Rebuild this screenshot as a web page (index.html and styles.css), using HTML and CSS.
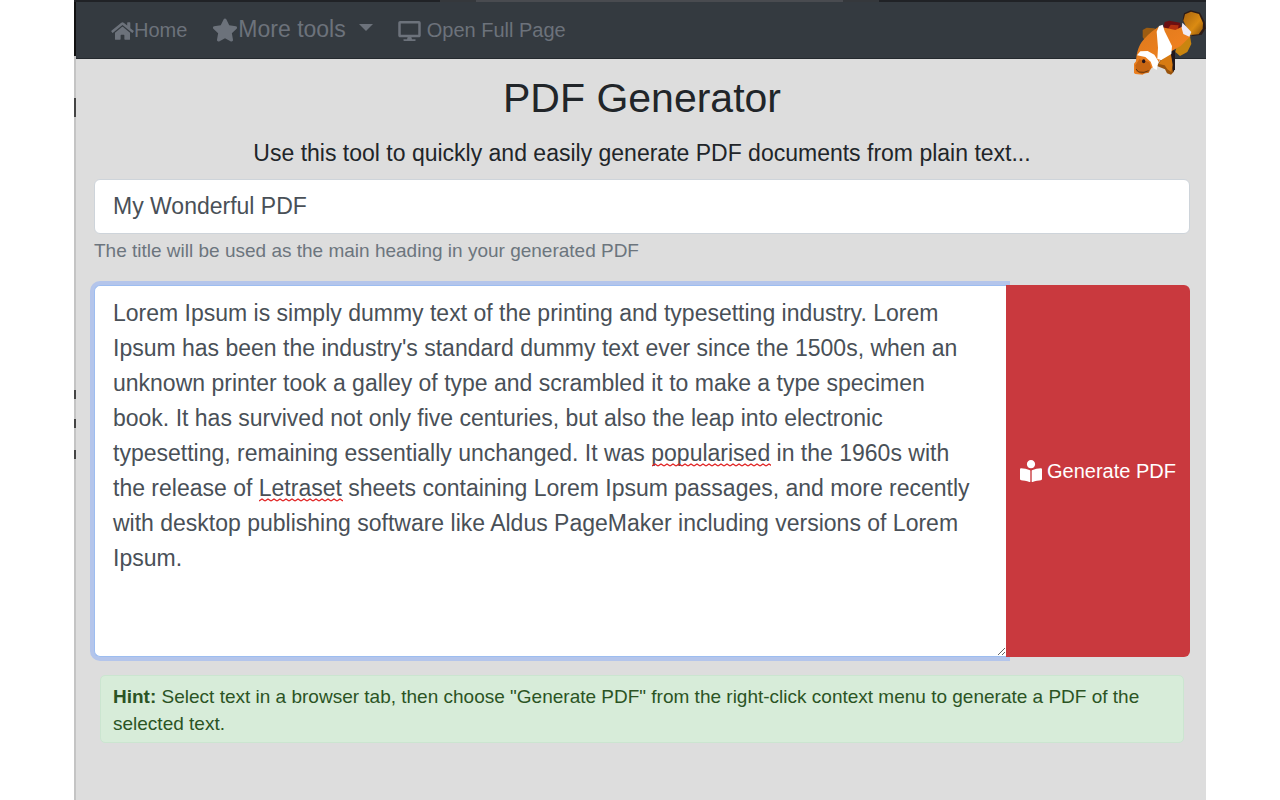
FILE: index.html
```
<!DOCTYPE html>
<html lang="en">
<head>
    <meta charset="UTF-8">
    <meta name="viewport" content="width=device-width, initial-scale=1.0">
    <title>PDF Generator</title>
    <link rel="stylesheet" href="styles.css">
</head>
<body>
    <div class="window">
        <div class="tab-strip"><span class="tab"></span><span class="tab light"></span><span class="tab"></span></div>
        <div class="edge">
            <i class="speck tall"></i>
            <i class="speck one"></i>
            <i class="speck two"></i>
            <i class="speck three"></i>
        </div>
        <div class="popup">
            <nav class="navbar">
                <a href="#" class="nav-link">
                    <svg class="icon-home" viewBox="0 0 576 512" fill="currentColor"><path d="M280.37 148.26L96 300.11V464a16 16 0 0 0 16 16l112.06-.29a16 16 0 0 0 15.92-16V368a16 16 0 0 1 16-16h64a16 16 0 0 1 16 16v95.64a16 16 0 0 0 16 16.05L464 480a16 16 0 0 0 16-16V300L295.67 148.26a12.19 12.19 0 0 0-15.3 0zM571.6 251.47L488 182.56V44.05a12 12 0 0 0-12-12h-56a12 12 0 0 0-12 12v72.61L318.47 43a48 48 0 0 0-61 0L4.34 251.47a12 12 0 0 0-1.6 16.9l25.5 31A12 12 0 0 0 45.15 301l235.22-193.74a12.19 12.19 0 0 1 15.3 0L530.9 301a12 12 0 0 0 16.9-1.6l25.5-31a12 12 0 0 0-1.7-16.93z"/></svg><span>Home</span>
                </a>
                <a href="#" class="nav-link dropdown">
                    <svg class="icon-star" viewBox="0 0 576 512" fill="currentColor"><path d="M259.3 17.8L194 150.2 47.9 171.5c-26.2 3.8-36.7 36.1-17.7 54.6l105.7 103-25 145.5c-4.5 26.3 23.2 46 46.4 33.7L288 439.6l130.7 68.7c23.2 12.2 50.9-7.4 46.4-33.7l-25-145.5 105.7-103c19-18.5 8.5-50.8-17.7-54.6L382 150.2 316.7 17.8c-11.7-23.6-45.6-23.9-57.4 0z"/></svg><span>More tools</span><i class="caret"></i>
                </a>
                <a href="#" class="nav-link">
                    <svg class="icon-screen" viewBox="0 0 576 512" fill="currentColor"><path d="M528 0H48C21.5 0 0 21.5 0 48v320c0 26.5 21.5 48 48 48h192l-16 48h-72c-13.3 0-24 10.7-24 24s10.700 24 24 24h272c13.300 0 24-10.700 24-24s-10.700-24-24-24h-72l-16-48h192c26.500 0 48-21.500 48-48V48c0-26.500-21.500-48-48-48zm-16 352H64V64h448v288z"/></svg><span>Open Full Page</span>
                </a>
                <svg class="fish" viewBox="72 30 216 198" aria-hidden="true">
                    <defs>
                        <linearGradient id="body" x1="0" y1="0" x2="1" y2="1">
                            <stop offset="0" stop-color="#d9781c"/>
                            <stop offset=".6" stop-color="#ee801f"/>
                            <stop offset="1" stop-color="#b45a10"/>
                        </linearGradient>
                        <linearGradient id="tail" x1="0" y1="0" x2="1" y2="1">
                            <stop offset="0" stop-color="#a8640f"/>
                            <stop offset=".6" stop-color="#db8b12"/>
                            <stop offset="1" stop-color="#8a5208"/>
                        </linearGradient>
                    </defs>
                    <path fill="#9c5c12" d="M98 112V90l12-7 22 2 10 5-6 22-26 16z"/>
                    <path fill="#6b0f12" d="M160 84l4-18 14-4 32 6 4 20-14 12-24 2z"/>
                    <path fill="#b3300f" d="M172 90l10-16 24 2-4 20z"/>
                    <path fill="#2c1b17" d="M218 60l4-20 20-9 28 7 14 27 3 20-12 19-28 4z"/>
                    <path fill="url(#tail)" d="M220 62l5-19 18-8 24 7 12 27-1 17-12 17-26 2z"/>
                    <path fill="#c9850f" d="M206 112l34-4 4 24-12 24-22 12-14-12z"/>
                    <path fill="#99540e" d="M150 182l38-32 7 24-4 42-8 8-12-4-6-12-24-10z"/>
                    <path fill="#21181c" d="M180 148l15 4v56l-6 8-4-30z"/>
                    <path fill="url(#body)" d="M78 184c2-28 8-48 22-64 12-14 24-26 46-40l22 4 28 6 20-10 26 28-30 30-28 16-26 14-20 28-22 14-18 14-22-2-18-14z"/>
                    <path fill="#d77b12" d="M152 182l30-24 6 36-4 22-12-8-8-12-18-4z"/>
                    <path fill="#fff" d="M147 78l11-4 6 20 22 44-2 24-30 18-12-3 2-34-4-48z"/>
                    <path fill="#eeeaf5" d="M217 68l10 10 17 18-6 14-18-8-5-18z"/>
                    <path fill="#fff" d="M81 166l10-12 22-1 20 11 12 20-5 26-11-6-7-19-16-14z"/>
                    <path fill="#c86612" d="M76 196l12-18 30 8 6 18-8 14-22 4-16-8z"/>
                    <path fill="none" stroke="#62360f" stroke-width="3" d="M78 207l8 9 16 1 14-5"/>
                    <ellipse cx="101" cy="184" rx="5" ry="6" fill="#27151b"/>
                </svg>
            </nav>
            <main class="content">
                <h1>PDF Generator</h1>
                <p class="lead">Use this tool to quickly and easily generate PDF documents from plain text...</p>
                <form>
                    <input type="text" class="title-input" id="title" value="My Wonderful PDF">
                    <label class="help" for="title">The title will be used as the main heading in your generated PDF</label>
                    <div class="input-group">
                        <div class="editor">
                            <textarea id="text" aria-label="PDF text" spellcheck="false">Lorem Ipsum is simply dummy text of the printing and typesetting industry. Lorem Ipsum has been the industry's standard dummy text ever since the 1500s, when an unknown printer took a galley of type and scrambled it to make a type specimen book. It has survived not only five centuries, but also the leap into electronic typesetting, remaining essentially unchanged. It was popularised in the 1960s with the release of Letraset sheets containing Lorem Ipsum passages, and more recently with desktop publishing software like Aldus PageMaker including versions of Lorem Ipsum.</textarea>
                            <svg class="squiggle popularised"><use href="#wave"/></svg>
                            <svg class="squiggle letraset"><use href="#wave"/></svg>
                        </div>
                        <button type="button" class="btn-generate">
                            <svg class="icon-reader" viewBox="0 0 512 512" fill="currentColor"><path d="M352 96c0-53.020-42.980-96-96-96s-96 42.980-96 96 42.980 96 96 96 96-42.980 96-96zM233.590 241.100c-59.330-36.320-155.430-46.300-203.790-49.050C13.550 191.130 0 203.510 0 219.140v222.800c0 14.330 11.590 26.280 26.490 27.050 43.660 2.290 131.990 10.680 193.040 41.430 9.370 4.720 20.480-1.710 20.480-11.870V252.560c-.01-4.670-2.320-8.950-6.420-11.460zm248.610-49.050c-48.350 2.740-144.460 12.730-203.780 49.050-4.100 2.510-6.410 6.960-6.410 11.630v245.790c0 10.190 11.140 16.630 20.540 11.900 61.040-30.720 149.320-39.110 192.970-41.400 14.900-.78 26.490-12.730 26.490-27.060V219.140c-.01-15.630-13.560-28.010-29.810-27.090z"/></svg>
                            Generate PDF
                        </button>
                    </div>
                </form>
                <div class="hint"><b>Hint:</b> Select text in a browser tab, then choose "Generate PDF" from the right-click context menu to generate a PDF of the selected text.</div>
            </main>
        </div>
    </div>

    <svg width="0" height="0" class="defs">
        <defs>
            <pattern id="zigzag" width="6" height="4" patternUnits="userSpaceOnUse">
                <path d="M0 3L3 1L6 3" fill="none" stroke="#e02020" stroke-width="1.300"/>
            </pattern>
            <rect id="wave" width="300" height="4" fill="url(#zigzag)"/>
        </defs>
    </svg>
</body>
</html>
```
FILE: styles.css
```
* {
    box-sizing: border-box;
}
body {
    margin: 0;
    background-color: white;
    color: #212529;
    font-family: "Liberation Sans", Arial, sans-serif;
    font-size: 23px;
    line-height: 35px;
}
.window {
    display: grid;
    grid-template-columns: 2px 1fr;
    grid-template-rows: 2px 1fr;
    min-height: 100vh;
    margin: 0 74px;
}
.tab-strip {
    grid-column: 1 / 3;
    display: flex;
    gap: 36px;
    background-color: #35383c;
}
.tab {
    flex: 366;
    background-color: #202226;
}
.tab.light {
    background-color: #494b50;
}
.tab:last-child {
    flex: 327;
}
.edge {
    position: relative;
    background: linear-gradient(to bottom, #111 54px, #c4c4c4 54px);
}
.speck {
    position: absolute;
    left: 0;
    width: 2px;
    height: 9px;
    background-color: #444;
}
.speck.tall {
    top: 96px;
    height: 19px;
}
.speck.one {
    top: 388px;
}
.speck.two {
    top: 417px;
}
.speck.three {
    top: 448px;
}
.popup {
    background-color: #ddd;
}
.navbar {
    position: relative;
    display: flex;
    align-items: center;
    gap: 25px;
    height: 57px;
    padding: 1px 35px 0;
    background-color: #343a40;
    border-bottom: 1px solid #24292e;
}
.nav-link {
    display: flex;
    align-items: center;
    color: #6c727b;
    font-size: 20px;
    text-decoration: none;
}
.nav-link.dropdown {
    font-size: 23px;
    padding-bottom: 2px;
}
.icon-home {
    width: 23px;
    height: 20px;
}
.icon-star {
    width: 26px;
    height: 24px;
}
.icon-screen {
    width: 23px;
    height: 20px;
    margin-right: 6px;
}
.caret {
    margin: 0 0 4px 13px;
    border-top: 7px solid;
    border-left: 7px solid transparent;
    border-right: 7px solid transparent;
}
.fish {
    position: absolute;
    top: 8px;
    right: 0;
    width: 72px;
    height: 66px;
}
.content {
    padding: 14px 16px 24px 18px;
}
h1 {
    margin: 0 0 13px;
    font-size: 41px;
    font-weight: normal;
    line-height: 50px;
    text-align: center;
}
.lead {
    margin: 0 0 8px;
    text-align: center;
}
.title-input {
    display: block;
    width: 100%;
    height: 55px;
    padding: 0 18px;
    border: 1px solid #ced4da;
    border-radius: 6px;
    background-color: white;
    color: #495057;
    font: inherit;
}
.help {
    display: block;
    margin-top: 3px;
    color: #6c757d;
    font-size: 19px;
    line-height: 28px;
}
.input-group {
    display: flex;
    margin-top: 20px;
}
.editor {
    position: relative;
    flex: 1;
    display: flex;
}
textarea {
    width: 100%;
    height: 372px;
    padding: 10px 24px 10px 18px;
    border: 1px solid #9dbdf0;
    border-right: none;
    border-radius: 6px 0 0 6px;
    outline: none;
    box-shadow: 0 0 0 4px #b4c5eb;
    background-color: white;
    color: #495057;
    font: inherit;
    resize: vertical;
}
/* spelling marks under the two unknown words */
.squiggle {
    position: absolute;
    height: 4px;
}
.squiggle.popularised {
    top: 178px;
    left: 558px;
    width: 119px;
}
.squiggle.letraset {
    top: 213px;
    left: 165px;
    width: 84px;
}
.btn-generate {
    position: relative;
    display: flex;
    align-items: center;
    justify-content: center;
    gap: 5px;
    width: 184px;
    border: none;
    border-radius: 0 6px 6px 0;
    background-color: #c9393e;
    color: white;
    font-family: inherit;
    font-size: 20px;
    cursor: pointer;
}
.icon-reader {
    width: 22px;
    height: 22px;
}
.hint {
    margin: 18px 6px 0;
    padding: 7px 12px 5px;
    border: 1px solid #cbe5d0;
    border-radius: 5px;
    background-color: #d7ecd9;
    color: #2b5424;
    font-size: 19px;
    line-height: 27px;
}
.defs {
    position: absolute;
}
```
